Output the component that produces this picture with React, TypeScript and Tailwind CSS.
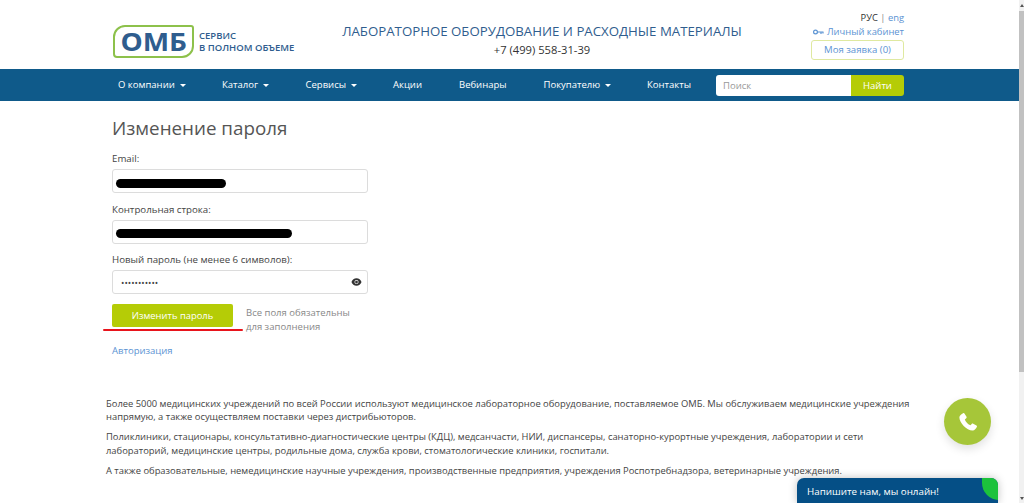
import React from "react";

const Caret = () => (
  <span className="inline-block ml-[5px] align-middle w-0 h-0 border-x-[3.5px] border-x-transparent border-t-[3.5px] border-t-white" />
);

const nav = [
  { t: "О компании", c: true, w: "w-[104px]" },
  { t: "Каталог", c: true, w: "w-[83.5px]" },
  { t: "Сервисы", c: true, w: "w-[87.5px]" },
  { t: "Акции", c: false, w: "w-[66px]" },
  { t: "Вебинары", c: false, w: "w-[84.5px]" },
  { t: "Покупателю", c: true, w: "w-[103.5px]" },
  { t: "Контакты", c: false, w: "w-[60px]" },
];

const Logo = () => (
  <div className="relative w-[81px] h-[33px] border-2 border-[#8dc14b] rounded-tl-[12px] rounded-br-[12px] rounded-tr-[3px] rounded-bl-[4px] flex items-center justify-center bg-white">
    <span className="text-[#2f5d8e] text-[25px] font-bold leading-none scale-x-[1.12] font-['Open_Sans',sans-serif]">ОМБ</span>
  </div>
);

const Field = ({ label, children }: { label: string; children: React.ReactNode }) => (
  <div className="mb-[8.5px]">
    <div className="text-[9.7px] leading-[16px] font-medium text-[#444] mb-[2px]">{label}</div>
    <div className="relative h-[24px] border border-[#dcdcdc] rounded-[3px] bg-white">{children}</div>
  </div>
);

export default function App() {
  return (
    <div className="relative w-[1024px] h-[503px] overflow-hidden bg-white font-['Open_Sans',sans-serif] text-[#444]">
      <header className="h-[69px] pl-[113px] pr-[120px] flex">
        <div className="flex items-center gap-[5px] w-[199px] pt-[14px]">
          <Logo />
          <div className="text-[9.5px] leading-[11.500px] font-semibold text-[#2f5d8e] whitespace-nowrap">
            СЕРВИС
            <br />В ПОЛНОМ ОБЪЕМЕ
          </div>
        </div>
        <div className="w-[446px] ml-[7px] text-center pt-[21px]">
          <div className="text-[13.250px] leading-[20px] text-[#2f5d8e] whitespace-nowrap">ЛАБОРАТОРНОЕ ОБОРУДОВАНИЕ И РАСХОДНЫЕ МАТЕРИАЛЫ</div>
          <div className="text-[11.200px] leading-[18px] text-[#333]">+7 (499) 558-31-39</div>
        </div>
        <div className="flex-1 flex flex-col items-end pt-[11px] text-[9.4px] leading-[14px]">
          <div className="text-[#333] whitespace-nowrap">
            РУС <span className="text-[#888]">|</span> <span className="text-[#5b93d3]">eng</span>
          </div>
          <div className="text-[#5b93d3] whitespace-nowrap flex items-center gap-[3px]">
            <svg width="11" height="6" viewBox="0 0 11 6" fill="none" stroke="#5b93d3" strokeWidth="1.2">
              <circle cx="2.5" cy="3" r="1.9" />
              <path d="M4.500 3H10.500M8 3V5M10 3V4.500" />
            </svg>
            Личный кабинет
          </div>
          <div className="mt-[1px] w-[93px] h-[20px] border border-[#dfe9a0] rounded-[3px] text-center text-[9.6px] leading-[18px] text-[#5b93d3]">Моя заявка (0)</div>
        </div>
      </header>

      <nav className="h-[32px] bg-[#0f5a8a] pl-[118px] pr-[120px] flex items-center text-white text-[9.5px]">
        {nav.map((n) => (
          <div key={n.t} className={`${n.w} whitespace-nowrap`}>
            {n.t}
            {n.c && <Caret />}
          </div>
        ))}
        <div className="flex h-[21px] ml-auto w-[188px]">
          <div className="flex-1 bg-white rounded-l-[3px] pl-[7px] text-[#999] leading-[21px]">Поиск</div>
          <div className="w-[53px] bg-[#b5cc06] rounded-r-[3px] text-center leading-[21px] font-medium">Найти</div>
        </div>
      </nav>

      <main className="pl-[112px] w-[368px]">
        <h1 className="text-[18.800px] leading-[26px] text-[#555] mt-[14px] mb-[10px]">Изменение пароля</h1>
        <Field label="Email:">
          <div className="absolute left-[3px] top-[9px] w-[110px] h-[9px] rounded-full bg-black" />
        </Field>
        <Field label="Контрольная строка:">
          <div className="absolute left-[3px] top-[8px] w-[176px] h-[9px] rounded-full bg-black" />
        </Field>
        <Field label="Новый пароль (не менее 6 символов):">
          <div className="absolute left-[8px] top-[1px] text-[9px] leading-[22px] text-[#444] font-normal whitespace-nowrap">•••••••••••</div>
          <svg className="absolute right-[5px] top-[6px]" width="11" height="10" viewBox="0 0 24 20" fill="#333" fillRule="evenodd">
            <path d="M12 2C7 2 2.700 5.100 1 10c1.700 4.900 6 8 11 8s9.300-3.100 11-8c-1.700-4.900-6-8-11-8zm0 3.500a4.500 4.500 0 1 1 0 9 4.500 4.500 0 0 1 0-9zm0 1.500a3 3 0 1 0 0 6 3 3 0 0 0 0-6z" />
          </svg>
        </Field>
        <div className="relative flex mt-[9.500px]">
          <div className="w-[121px] h-[23px] bg-[#b5cc06] rounded-[2px] text-white text-[9.4px] leading-[23px] text-center font-medium">Изменить пароль</div>
          <div className="ml-[13px] pt-[2px] text-[9.5px] leading-[14px] text-[#888] whitespace-nowrap">
            Все поля обязательны
            <br />
            для заполнения
          </div>
          <div className="absolute left-[-9px] top-[25px] w-[140px] h-[2.500px] bg-[#e8141c] rounded-full" />
        </div>
        <div className="text-[9.5px] leading-[14px] text-[#5b93d3] mt-[10px]">Авторизация</div>
      </main>

      <section className="pl-[106px] w-[915px] mt-[39px] text-[9.380px] leading-[13.500px] text-[#444]">
        <p className="mb-[6.500px]">Более 5000 медицинских учреждений по всей России используют медицинское лабораторное оборудование, поставляемое ОМБ. Мы обслуживаем медицинские учреждения напрямую, а также осуществляем поставки через дистрибьюторов.</p>
        <p className="mb-[6.500px]">Поликлиники, стационары, консультативно-диагностические центры (КДЦ), медсанчасти, НИИ, диспансеры, санаторно-курортные учреждения, лаборатории и сети лабораторий, медицинские центры, родильные дома, служба крови, стоматологические клиники, госпитали.</p>
        <p>А также образовательные, немедицинские научные учреждения, производственные предприятия, учреждения Роспотребнадзора, ветеринарные учреждения.</p>
      </section>

      <div className="absolute left-[944px] top-[398px] w-[47px] h-[47px] rounded-full bg-[#a6c639] shadow-[0_4px_10px_rgba(0,0,0,0.12)] flex items-center justify-center">
        <svg width="22" height="22" viewBox="0 0 24 24" fill="white">
          <path d="M6.600 2.500c.6-.4 1.300-.2 1.700.4l2.100 3.400c.3.6.2 1.300-.3 1.700L8.500 9.200c.8 2.500 3.700 5.600 6.300 6.400l1.200-1.500c.4-.5 1.100-.6 1.700-.3l3.500 2c.6.400.8 1.100.4 1.700-.9 1.700-2.400 3.800-4.400 3.900C11 21.700 2.300 12.800 2.600 6.900c.1-2 2.300-3.500 4-4.400z" />
        </svg>
      </div>

      <div className="absolute left-[797px] top-[478px] w-[201px] h-[25px] bg-[#054f86] rounded-t-[7px] overflow-hidden shadow-[0_0_8px_rgba(0,0,0,0.25)] text-white text-[9.800px] leading-[27px] pl-[10px]">
        Напишите нам, мы онлайн!
        <div className="absolute right-[-1px] top-[-1px] w-[17px] h-[23px] rounded-bl-[17px] rounded-tr-[7px] bg-[#1cc23c]" />
      </div>

      <div className="absolute right-0 top-0 w-[5px] h-[503px] bg-[#f1f1f1] flex flex-col items-center">
        <div className="mt-[4px] w-0 h-0 border-x-[2.500px] border-x-transparent border-b-[3px] border-b-[#555]" />
        <div className="mt-[4px] w-full h-[361px] bg-[#c1c1c1]" />
        <div className="mt-auto mb-[3px] w-0 h-0 border-x-[2.500px] border-x-transparent border-t-[3px] border-t-[#555]" />
      </div>
    </div>
  );
}
